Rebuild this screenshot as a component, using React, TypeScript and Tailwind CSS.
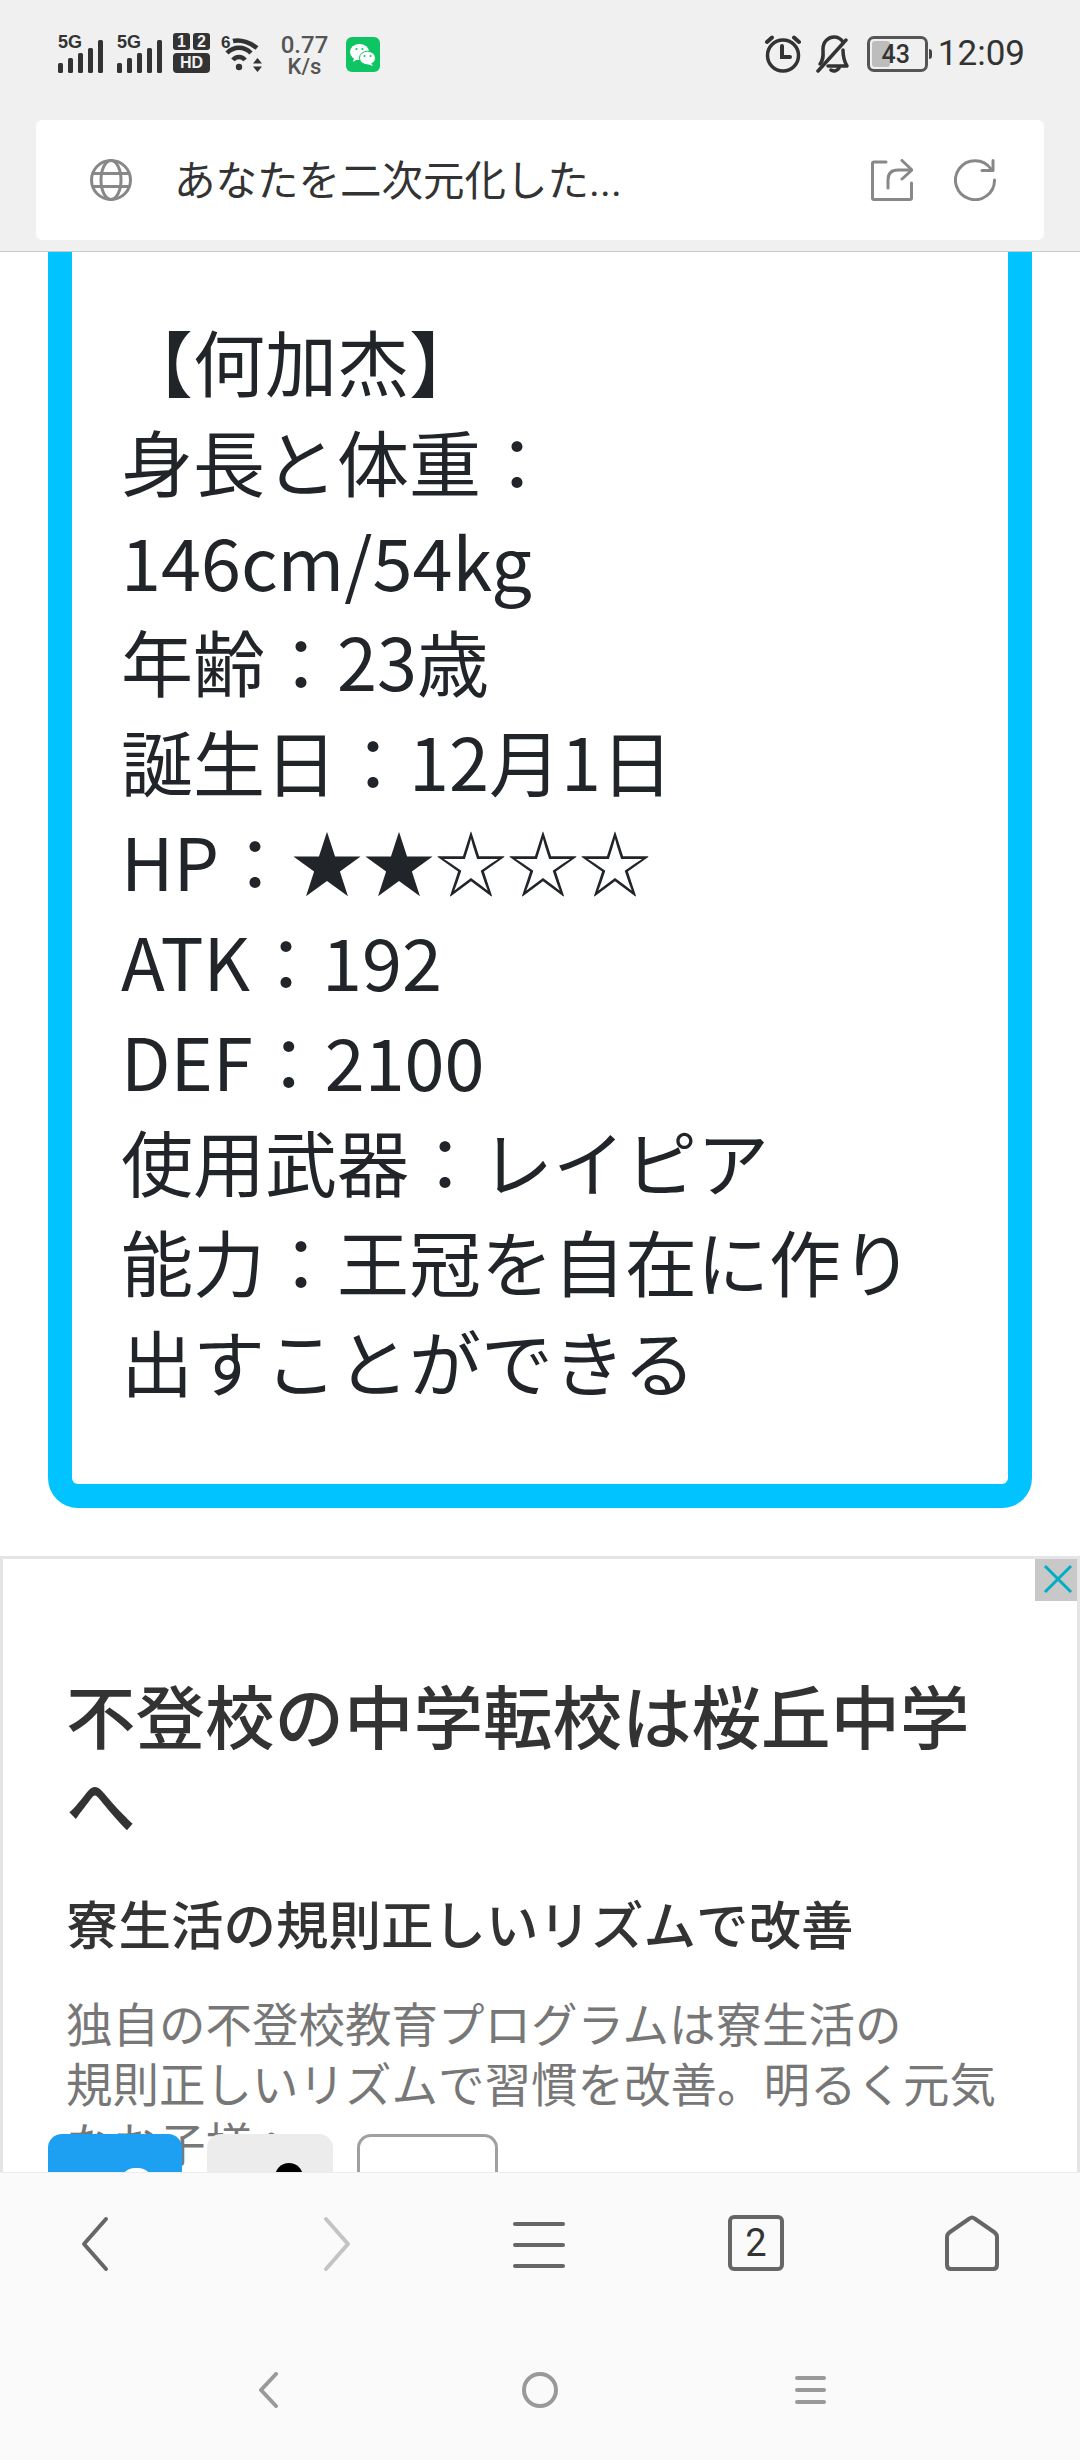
import React from "react";

const jp = "font-['Noto_Sans_CJK_JP','Noto_Sans',sans-serif]";
const roboto = "font-['Roboto','Liberation_Sans',sans-serif]";
const arial = "font-['Liberation_Sans','Roboto',sans-serif]";

const profileLines = [
  "【何加杰】",
  "身長と体重：",
  "146cm/54kg",
  "年齢：23歳",
  "誕生日：12月1日",
  "HP：★★☆☆☆",
  "ATK：192",
  "DEF：2100",
  "使用武器：レイピア",
  "能力：王冠を自在に作り",
  "出すことができる",
];

const Signal: React.FC = () => (
  <div className="relative h-[38px] w-[45px]">
    <span className={`absolute left-0 top-0 text-[18px] leading-[15px] font-bold text-[#333] ${arial}`}>5G</span>
    <svg width="45" height="38" viewBox="0 0 45 38" className="absolute left-0 top-0" fill="#333">
      <rect x="0" y="28" width="5" height="10" rx="1.5" />
      <rect x="10" y="23" width="5" height="15" rx="1.5" />
      <rect x="20" y="18" width="5" height="20" rx="1.5" />
      <rect x="30" y="13" width="5" height="25" rx="1.5" />
      <rect x="40" y="5" width="5" height="33" rx="1.5" />
    </svg>
  </div>
);

const StatusBar: React.FC = () => (
  <div className="flex h-[120px] items-start justify-between pl-[58px] pr-[55px] pt-[35px]">
    <div className="flex items-start">
      <Signal />
      <div className="ml-[14px]">
        <Signal />
      </div>
      <div className="ml-[11px] -mt-[2px] flex w-[37px] flex-col gap-[3px]">
        <div className="flex gap-[3px]">
          <span className={`flex h-[17px] w-[17px] items-center justify-center rounded-[3px] bg-[#333] text-[16px] font-bold text-[#f0f0f0] ${arial}`}>1</span>
          <span className={`flex h-[17px] w-[17px] items-center justify-center rounded-[3px] bg-[#333] text-[16px] font-bold text-[#f0f0f0] ${arial}`}>2</span>
        </div>
        <span className={`flex h-[20px] items-center justify-center rounded-[4px] bg-[#333] text-[16px] font-bold text-[#f0f0f0] ${arial}`}>HD</span>
      </div>
      <div className="relative ml-[11px] h-[38px] w-[41px]">
        <span className={`absolute left-0 top-0 text-[17px] leading-[15px] font-bold text-[#333] ${arial}`}>6</span>
        <svg width="41" height="38" viewBox="0 0 41 38" fill="none" stroke="#333" strokeWidth="4.5" className="absolute left-0 top-0">
          <path d="M12 6 C20 4 30 8 36 13" />
          <path d="M6 18 C13 11 23 11 30 18" />
          <path d="M12 25 C15 21 21 21 24 25" />
          <circle cx="18" cy="32" r="3.2" fill="#333" stroke="none" />
          <path d="M36.5 23 L41 28.5 H32 Z M36.5 37 L41 31.5 H32 Z" fill="#333" stroke="none" />
        </svg>
      </div>
      <div className={`ml-[19px] flex w-[47px] flex-col items-center text-[24px] font-medium leading-[21px] text-[#555] ${roboto}`}>
        <span>0.77</span>
        <span className="text-[22px]">K/s</span>
      </div>
      <div className="ml-[18px] mt-[2px] flex h-[35px] w-[34px] items-center justify-center rounded-[6px] bg-[#0fc463]">
        <svg width="28" height="26" viewBox="0 0 28 26" fill="#fff">
          <ellipse cx="10.5" cy="10" rx="9.5" ry="8" />
          <path d="M5 16 L4 20 L9 17 Z" />
          <circle cx="7.5" cy="7" r="1.1" fill="#0fc463" />
          <circle cx="13.5" cy="7" r="1.1" fill="#0fc463" />
          <ellipse cx="18.5" cy="16" rx="8" ry="6.8" stroke="#0fc463" strokeWidth="1" />
          <path d="M22 21 L24 24 L18 22 Z" />
          <circle cx="15.5" cy="14" r="1" fill="#0fc463" />
          <circle cx="21.5" cy="14" r="1" fill="#0fc463" />
        </svg>
      </div>
    </div>
    <div className="flex items-start">
      <svg width="38" height="38" viewBox="0 0 38 38" fill="none" stroke="#333" strokeWidth="3.5" strokeLinecap="round">
        <circle cx="19" cy="20.5" r="15.5" />
        <path d="M18 11 V22 H26" strokeWidth="4" />
        <path d="M3 7 L8 2.5 M35 7 L30 2.5" strokeWidth="4" />
      </svg>
      <svg width="34" height="38" viewBox="0 0 34 38" fill="none" stroke="#333" strokeWidth="3.5" strokeLinecap="round" strokeLinejoin="round" className="ml-[14px]">
        <path d="M4 29 C8 24 7 20 7 14 C7 6 13 2 18 2 C22 2 25 4 27 7" />
        <path d="M27 15 C27 22 28 26 31 31 H12" />
        <path d="M15 35 C18 37 21 36 23 33" />
        <path d="M2 36 L30 5" />
      </svg>
      <div className="relative ml-[17px] mt-[1px] flex h-[36px] w-[61px] items-center justify-center rounded-[7px] border-[3px] border-[#555]">
        <div className="absolute bottom-[2px] left-[2px] top-[2px] w-[18px] rounded-[3px] bg-[#bdbdbd]" />
        <span className={`relative -ml-[3px] text-[25px] font-medium leading-none text-[#333] ${roboto}`}>43</span>
        <div className="absolute -right-[7px] top-[10px] h-[10px] w-[3px] rounded-r-[3px] bg-[#444]" />
      </div>
      <span className={`ml-[10px] mt-[1px] text-[35px] leading-[36px] text-[#333] ${roboto}`}>12:09</span>
    </div>
  </div>
);

const AddressBar: React.FC = () => (
  <div className="mx-[36px] flex h-[120px] items-center rounded-[6px] bg-white pl-[54px] pr-[48px]">
    <svg width="42" height="42" viewBox="0 0 42 42" fill="none" stroke="#888" strokeWidth="3">
      <circle cx="21" cy="21" r="19.5" />
      <ellipse cx="21" cy="21" rx="10" ry="19.5" />
      <path d="M3 14.5 H39 M3 27.5 H39" />
    </svg>
    <span className={`ml-[42px] flex-1 text-[41.5px] leading-none text-[#333] ${jp}`}>
      あなたを二次元化した<span className={roboto}>...</span>
    </span>
    <svg width="42" height="42" viewBox="0 0 42 42" fill="none" stroke="#888" strokeWidth="3" strokeLinecap="round" strokeLinejoin="round">
      <path d="M15 3 H3 Q1.5 3 1.5 4.5 V39 Q1.5 40.5 3 40.5 H39 Q40.5 40.5 40.5 39 V24" />
      <path d="M17 29 V21 Q17 11 27 11 H40" />
      <path d="M31 1.5 L41 11 L31 20" />
    </svg>
    <svg width="42" height="42" viewBox="0 0 42 42" fill="none" stroke="#888" strokeWidth="3" strokeLinecap="round" strokeLinejoin="round" className="ml-[41px]">
      <path d="M37 10 A19.5 19.5 0 1 0 40.5 21" />
      <path d="M39 1.5 V11.5 H28" />
    </svg>
  </div>
);

const ProfileCard: React.FC = () => (
  <div className="mx-[48px] rounded-b-[30px] border-x-[24px] border-b-[24px] border-[#00c3ff] pb-[74px] pl-[49px] pt-[58px]">
    {profileLines.map((line) => (
      <div key={line} className={`text-[72px] leading-[100px] text-[#212529] ${jp}`}>
        {line}
      </div>
    ))}
  </div>
);

const AdBlock: React.FC = () => (
  <div className="relative mt-[48px] flex-1 overflow-hidden border-x-[3px] border-t-[3px] border-[#e5e5e5] pl-[63px] pr-[40px] pt-[111px]">
    <div className="absolute right-[-3px] top-[-3px] flex h-[45px] w-[45px] items-center justify-center bg-[#c8c8c8]">
      <svg width="30" height="30" viewBox="0 0 30 30" stroke="#00aec4" strokeWidth="3">
        <path d="M2 2 L28 28 M28 2 L2 28" />
      </svg>
    </div>
    <div className={`text-[69.5px] font-medium leading-[88px] text-[#333] ${jp}`}>
      不登校の中学転校は桜丘中学
      <br />
      へ
    </div>
    <div className={`mt-[41px] text-[52.5px] font-medium leading-[70px] text-[#333] ${jp}`}>
      寮生活の規則正しいリズムで改善
    </div>
    <div className={`mt-[35px] text-[46.5px] leading-[60px] text-[#777] ${jp}`}>
      独自の不登校教育プログラムは寮生活の
      <br />
      規則正しいリズムで習慣を改善。明るく元気
      <br />
      なお子様へ
    </div>
    <div className="absolute left-[45px] top-[575px] h-[60px] w-[134px] overflow-hidden rounded-t-[14px] bg-[#1d9ff2]">
      <div className="absolute left-[72px] top-[34px] h-[30px] w-[33px] rounded-full bg-white" />
    </div>
    <div className="absolute left-[204px] top-[575px] h-[60px] w-[126px] overflow-hidden rounded-t-[14px] bg-[#ececec]">
      <div className="absolute left-[68px] top-[29px] h-[28px] w-[28px] rounded-full bg-black" />
    </div>
    <div className="absolute left-[354px] top-[575px] h-[60px] w-[141px] rounded-t-[14px] border-x-[3px] border-t-[3px] border-[#a0a0a0] bg-white" />
  </div>
);

const BottomNav: React.FC = () => (
  <div className="h-[288px] border-t-[1px] border-[#ececec] bg-[#fafafa]">
    <div className="flex items-start pt-[42px]">
      <svg width="28" height="56" viewBox="0 0 28 56" fill="none" stroke="#666" strokeWidth="4" strokeLinecap="round" strokeLinejoin="round" className="ml-[81px] mt-[1px]">
        <path d="M25 3 L3 28 L25 53" />
      </svg>
      <svg width="28" height="56" viewBox="0 0 28 56" fill="none" stroke="#c4c4c4" strokeWidth="4" strokeLinecap="round" strokeLinejoin="round" className="ml-[214px] mt-[1px]">
        <path d="M3 3 L25 28 L3 53" />
      </svg>
      <div className="ml-[162px] mt-[7px] flex w-[52px] flex-col gap-[17px]">
        <div className="h-[4px] rounded-full bg-[#666]" />
        <div className="h-[4px] rounded-full bg-[#666]" />
        <div className="h-[4px] rounded-full bg-[#666]" />
      </div>
      <div className={`ml-[163px] flex h-[56px] w-[56px] items-center justify-center rounded-[6px] border-[4px] border-[#666] text-[38px] leading-none text-[#333] ${roboto}`}>
        2
      </div>
      <svg width="54" height="56" viewBox="0 0 54 56" fill="none" stroke="#666" strokeWidth="4" strokeLinejoin="round" className="ml-[161px]">
        <path d="M24.5 3.5 Q27 1.5 29.5 3.5 L49 17 Q52 19 52 22 V50 Q52 54 48 54 H6 Q2 54 2 50 V22 Q2 19 5 17 Z" />
      </svg>
    </div>
    <div className="mt-[100px] flex items-center justify-center pl-[3px]">
      <svg width="20" height="36" viewBox="0 0 20 36" fill="none" stroke="#999" strokeWidth="4" strokeLinecap="round" strokeLinejoin="round">
        <path d="M18 2 L3 18 L18 34" />
      </svg>
      <div className="ml-[244px] h-[36px] w-[36px] rounded-full border-[4px] border-[#999]" />
      <div className="ml-[237px] flex w-[31px] flex-col gap-[8px]">
        <div className="h-[4px] rounded-full bg-[#999]" />
        <div className="h-[4px] rounded-full bg-[#999]" />
        <div className="h-[4px] rounded-full bg-[#999]" />
      </div>
    </div>
  </div>
);

export default function App() {
  return (
    <div className="flex h-[2460px] w-[1080px] flex-col overflow-hidden bg-white">
      <div className="h-[252px] border-b-[1px] border-[#c8c8c8] bg-[#f0f0f0]">
        <StatusBar />
        <AddressBar />
      </div>
      <div className="flex flex-1 flex-col overflow-hidden">
        <ProfileCard />
        <AdBlock />
      </div>
      <BottomNav />
    </div>
  );
}
